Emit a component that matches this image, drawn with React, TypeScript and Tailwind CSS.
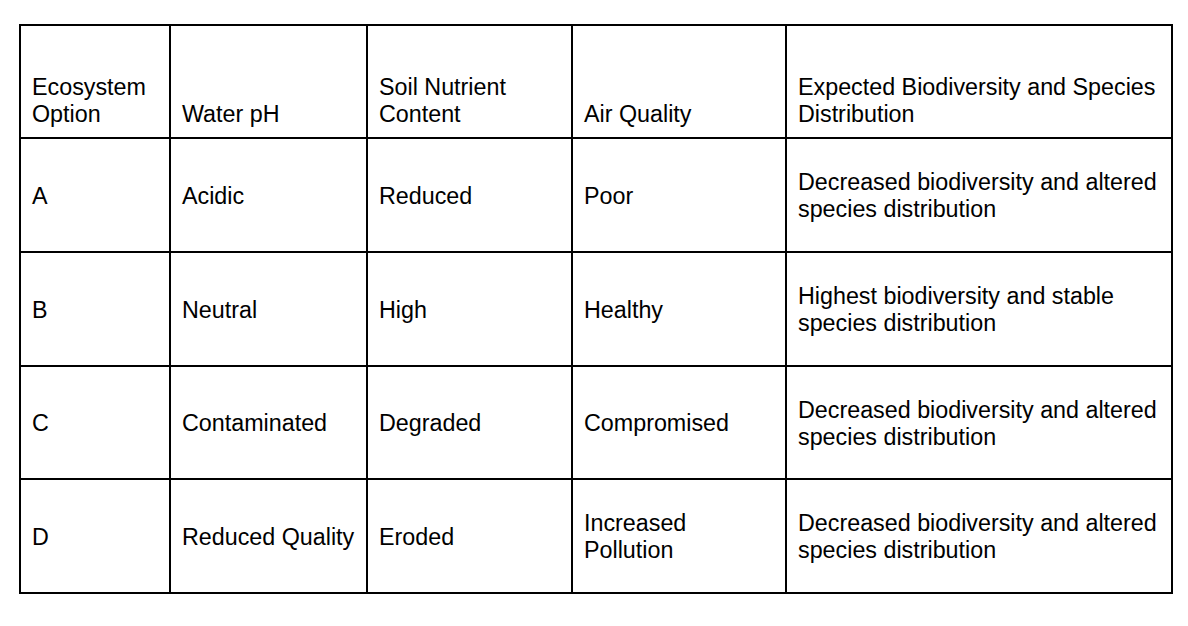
const header = [
  ["Ecosystem", "Option"],
  ["Water pH"],
  ["Soil Nutrient", "Content"],
  ["Air Quality"],
  ["Expected Biodiversity and Species", "Distribution"],
];

const rows: string[][][] = [
  [["A"], ["Acidic"], ["Reduced"], ["Poor"], ["Decreased biodiversity and altered", "species distribution"]],
  [["B"], ["Neutral"], ["High"], ["Healthy"], ["Highest biodiversity and stable", "species distribution"]],
  [["C"], ["Contaminated"], ["Degraded"], ["Compromised"], ["Decreased biodiversity and altered", "species distribution"]],
  [["D"], ["Reduced Quality"], ["Eroded"], ["Increased", "Pollution"], ["Decreased biodiversity and altered", "species distribution"]],
];

function Lines({ lines }: { lines: string[] }) {
  return (
    <div>
      {lines.map((l, i) => (
        <div key={i} className="whitespace-nowrap">{l}</div>
      ))}
    </div>
  );
}

export default function App() {
  return (
    <div className="min-h-screen w-full bg-white pt-[24px] pl-[19px] font-['Liberation_Sans',Arial,sans-serif] text-[23.3px] leading-[27px] text-black">
      <div className="grid w-fit grid-cols-[148px_195px_203px_212px_384px] grid-rows-[111px_112px_112px_111px_112px] gap-[2px] bg-black p-[2px]">
        {header.map((h, i) => (
          <div key={i} className="flex items-end bg-white px-[11px] pb-[9px]">
            <Lines lines={h} />
          </div>
        ))}
        {rows.map((r, ri) =>
          r.map((c, ci) => (
            <div key={`${ri}-${ci}`} className="flex items-center bg-white px-[11px] pt-[2px]">
              <Lines lines={c} />
            </div>
          ))
        )}
      </div>
    </div>
  );
}
